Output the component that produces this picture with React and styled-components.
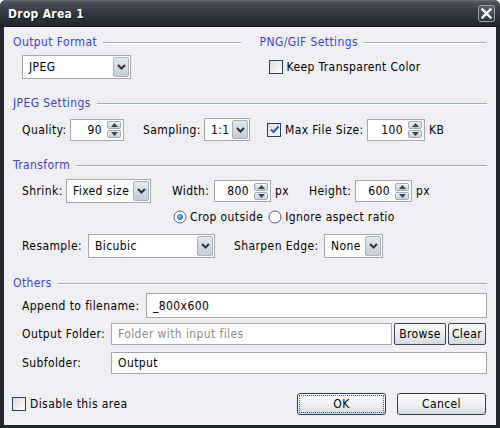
import React from "react";
import styled, { createGlobalStyle } from "styled-components";

const GlobalStyle = createGlobalStyle`
  html, body {
    margin: 0;
    padding: 0;
    background: #ffffff;
  }
  body {
    font-family: "DejaVu Sans Condensed", "DejaVu Sans", sans-serif;
    font-stretch: condensed;
    font-size: 12px;
    letter-spacing: 0.4px;
    color: #000;
  }
`;

const Chevron = () => (
  <svg width="9" height="6" viewBox="0 0 9 6">
    <path d="M1 1 L4.5 4.5 L8 1" fill="none" stroke="#28303e" strokeWidth="2" />
  </svg>
);

const CheckMark = () => (
  <svg width="11" height="11" viewBox="0 0 11 11">
    <path d="M2 5.5 L4.5 8 L9.5 2.5" fill="none" stroke="#2557c8" strokeWidth="2" />
  </svg>
);

const CloseIcon = () => (
  <svg width="11" height="11" viewBox="0 0 11 11">
    <path d="M1.5 1.5 L9.5 9.5 M9.5 1.5 L1.5 9.5" stroke="#ffffff" strokeWidth="2.4" strokeLinecap="square" />
  </svg>
);

const RadioDot = ({ on }) => (
  <svg width="14" height="14" viewBox="0 0 14 14">
    <circle cx="7" cy="7" r="6" fill="#ffffff" stroke="#4a5f80" strokeWidth="1" />
    {on && <circle cx="7" cy="7" r="3" fill="#3587c8" />}
    {on && <circle cx="6.4" cy="6.4" r="1.1" fill="#b8e0f8" />}
  </svg>
);

const Arrow = ({ up }) => (
  <svg width="7" height="4" viewBox="0 0 7 4">
    <path d={up ? "M0 4 L3.5 0 L7 4 Z" : "M0 0 L3.5 4 L7 0 Z"} fill="#3a4252" />
  </svg>
);

const Select = ({ value, w, h }) => (
  <SelectBox $w={w} $h={h}>
    <SelectValue>{value}</SelectValue>
    <DropButton>
      <Chevron />
    </DropButton>
  </SelectBox>
);

const Spin = ({ value, w }) => (
  <NumberBox $w={w}>
    <NumberValue>{value}</NumberValue>
    <SpinButtons>
      <SpinHalf>
        <Arrow up />
      </SpinHalf>
      <SpinHalf>
        <Arrow />
      </SpinHalf>
    </SpinButtons>
  </NumberBox>
);

const Check = ({ checked, children }) => (
  <CheckLabel>
    <CheckBox>{checked && <CheckMark />}</CheckBox>
    {children}
  </CheckLabel>
);

const Radio = ({ on, children }) => (
  <RadioLabel>
    <RadioDot on={on} />
    {children}
  </RadioLabel>
);

const App = () => {
  return (
    <>
      <GlobalStyle />
      <Window>
        <TitleBar>
          <Title>Drop Area 1</Title>
          <CloseButton>
            <CloseIcon />
          </CloseButton>
        </TitleBar>
        <Body>
          <Columns>
            <Column>
              <Legend>Output Format</Legend>
              <Row $mt={6}>
                <Select value="JPEG" w={109} h={24} />
              </Row>
            </Column>
            <Column>
              <Legend>PNG/GIF Settings</Legend>
              <Row $mt={6} $h={24}>
                <Check>Keep Transparent Color</Check>
              </Row>
            </Column>
          </Columns>

          <Legend $mt={17}>JPEG Settings</Legend>
          <Row $mt={8}>
            <Label $w={48}>Quality:</Label>
            <Spin value="90" w={54} />
            <Label $w={61} $ml={19}>Sampling:</Label>
            <Select value="1:1" w={46} h={23} />
            <Gap $w={17} />
            <Check checked>
              <Label $w={82}>Max File Size:</Label>
            </Check>
            <Spin value="100" w={58} />
            <Label $ml={4}>KB</Label>
          </Row>

          <Legend $mt={17}>Transform</Legend>
          <Row $mt={7}>
            <Label $w={44}>Shrink:</Label>
            <Select value="Fixed size" w={85} h={24} />
            <Label $w={42} $ml={21}>Width:</Label>
            <Spin value="800" w={57} />
            <Label $ml={4}>px</Label>
            <Label $w={46} $ml={20}>Height:</Label>
            <Spin value="600" w={57} />
            <Label $ml={4}>px</Label>
          </Row>
          <Row $mt={7} $pl={160}>
            <Radio on>Crop outside</Radio>
            <Gap $w={5} />
            <Radio>Ignore aspect ratio</Radio>
          </Row>
          <Row $mt={10}>
            <Label $w={66}>Resample:</Label>
            <Select value="Bicubic" w={127} h={24} />
            <Label $w={90} $ml={19}>Sharpen Edge:</Label>
            <Select value="None" w={59} h={24} />
          </Row>

          <Legend $mt={18}>Others</Legend>
          <Row $mt={3}>
            <Label $w={124}>Append to filename:</Label>
            <TextBox $h={25}>_800x600</TextBox>
          </Row>
          <Row $mt={5}>
            <Label $w={89}>Output Folder:</Label>
            <TextBox $h={22} $muted>Folder with input files</TextBox>
            <SmallButton $w={52} $ml={2}>Browse</SmallButton>
            <SmallButton $w={38} $ml={2}>Clear</SmallButton>
            <Gap $w={1} />
          </Row>
          <Row $mt={7}>
            <Label $w={89}>Subfolder:</Label>
            <TextBox $h={22}>Output</TextBox>
          </Row>

          <Footer>
            <Check>Disable this area</Check>
            <DialogButton $default>
              <FocusRing>OK</FocusRing>
            </DialogButton>
            <DialogButton>Cancel</DialogButton>
          </Footer>
        </Body>
      </Window>
    </>
  );
};

const Window = styled.div`
  width: 500px;
  height: 428px;
  box-sizing: border-box;
  display: flex;
  flex-direction: column;
  background: #24272d;
  border-radius: 6px 6px 0 0;
  overflow: hidden;
`;

const TitleBar = styled.div`
  height: 26px;
  flex-shrink: 0;
  display: flex;
  align-items: center;
  justify-content: space-between;
  padding: 0 5px 0 8px;
  background: linear-gradient(#6b717d 0px, #4b515c 2px, #353a43 12px, #22252b 26px);
  border-bottom: 1px solid #15171b;
`;

const Title = styled.div`
  color: #ffffff;
  font-weight: bold;
  font-size: 12px;
  letter-spacing: 0.3px;
  text-shadow: 1px 1px 0 #101216;
  margin-top: 2px;
`;

const CloseButton = styled.div`
  width: 17px;
  height: 17px;
  box-sizing: border-box;
  display: flex;
  align-items: center;
  justify-content: center;
  border: 1px solid #9aa0aa;
  border-radius: 3px;
  background: linear-gradient(#5a606b, #2e323a);
  margin-top: 1px;
`;

const Body = styled.div`
  flex: 1;
  margin: 0 4px 3px;
  padding: 8px 9px 0 9px;
  background: #f0f0f4;
  display: flex;
  flex-direction: column;
`;

const Columns = styled.div`
  display: flex;
  gap: 19px;
`;

const Column = styled.div`
  flex: 1 1 0;
  min-width: 0;
  display: flex;
  flex-direction: column;
`;

const Legend = styled.div`
  display: flex;
  align-items: center;
  gap: 6px;
  height: 14px;
  line-height: 14px;
  color: #3a45c6;
  margin-top: ${(p) => p.$mt || 0}px;
  &::after {
    content: "";
    flex: 1;
    height: 1px;
    background: #9ca7dc;
    box-shadow: 0 1px 0 #ffffff;
  }
`;

const Row = styled.div`
  display: flex;
  align-items: center;
  padding-left: ${(p) => p.$pl || 9}px;
  margin-top: ${(p) => p.$mt || 0}px;
  ${(p) => (p.$h ? `height: ${p.$h}px;` : "")}
`;

const Gap = styled.div`
  width: ${(p) => p.$w}px;
  flex-shrink: 0;
`;

const Label = styled.span`
  display: inline-block;
  flex-shrink: 0;
  white-space: nowrap;
  ${(p) => (p.$w ? `width: ${p.$w}px;` : "")}
  margin-left: ${(p) => p.$ml || 0}px;
`;

const SelectBox = styled.div`
  width: ${(p) => p.$w}px;
  height: ${(p) => p.$h}px;
  flex-shrink: 0;
  box-sizing: border-box;
  display: flex;
  border: 1px solid #a7a7a7;
  background: #ffffff;
  padding: 1px;
`;

const SelectValue = styled.div`
  flex: 1;
  display: flex;
  align-items: center;
  padding-left: 5px;
  white-space: nowrap;
  overflow: hidden;
`;

const DropButton = styled.div`
  width: 16px;
  box-sizing: border-box;
  display: flex;
  align-items: center;
  justify-content: center;
  border: 1px solid #a9b1be;
  border-radius: 2px;
  background: linear-gradient(#e4e9f0, #c5ccd8);
`;

const NumberBox = styled.div`
  width: ${(p) => p.$w}px;
  height: 22px;
  flex-shrink: 0;
  box-sizing: border-box;
  display: flex;
  align-items: center;
  border: 1px solid #a7a7a7;
  background: #ffffff;
  padding: 1px 2px 1px 4px;
`;

const NumberValue = styled.div`
  flex: 1;
  text-align: right;
  padding-right: 5px;
`;

const SpinButtons = styled.div`
  width: 14px;
  height: 17px;
  display: flex;
  flex-direction: column;
  gap: 1px;
`;

const SpinHalf = styled.div`
  flex: 1;
  box-sizing: border-box;
  display: flex;
  align-items: center;
  justify-content: center;
  border: 1px solid #a2a9b5;
  border-radius: 2px;
  background: linear-gradient(#eef1f5, #c9d0da);
`;

const CheckLabel = styled.label`
  display: flex;
  align-items: center;
  gap: 4px;
  white-space: nowrap;
`;

const CheckBox = styled.span`
  width: 14px;
  height: 14px;
  box-sizing: border-box;
  display: flex;
  align-items: center;
  justify-content: center;
  border: 1px solid #23406e;
  background: linear-gradient(135deg, #dcdcdc, #ffffff);
`;

const RadioLabel = styled.label`
  display: flex;
  align-items: center;
  gap: 3px;
  white-space: nowrap;
`;

const TextBox = styled.div`
  flex: 1;
  height: ${(p) => p.$h}px;
  box-sizing: border-box;
  display: flex;
  align-items: center;
  padding-left: 6px;
  border: 1px solid #a7a7a7;
  background: #ffffff;
  color: ${(p) => (p.$muted ? "#8a8a8a" : "#000000")};
  white-space: nowrap;
`;

const SmallButton = styled.div`
  width: ${(p) => p.$w}px;
  height: 22px;
  flex-shrink: 0;
  box-sizing: border-box;
  margin-left: ${(p) => p.$ml || 0}px;
  display: flex;
  align-items: center;
  justify-content: center;
  border: 1px solid #3e4654;
  border-radius: 2px;
  background: linear-gradient(#ffffff, #d4d9e2);
`;

const Footer = styled.div`
  display: flex;
  align-items: center;
  gap: 11px;
  margin-top: 19px;
  margin-left: -1px;
  padding-right: 1px;
  & > :first-child {
    margin-right: auto;
  }
`;

const DialogButton = styled.div`
  width: 89px;
  height: 22px;
  box-sizing: border-box;
  display: flex;
  align-items: center;
  justify-content: center;
  padding: 2px;
  border: 1px solid ${(p) => (p.$default ? "#1d3c8c" : "#383c44")};
  border-radius: 3px;
  background: linear-gradient(#ffffff, #f1f2f4 50%, #d5d8de);
`;

const FocusRing = styled.div`
  flex: 1;
  align-self: stretch;
  display: flex;
  align-items: center;
  justify-content: center;
  outline: 1px dotted #5a5a5a;
`;

export default App;
